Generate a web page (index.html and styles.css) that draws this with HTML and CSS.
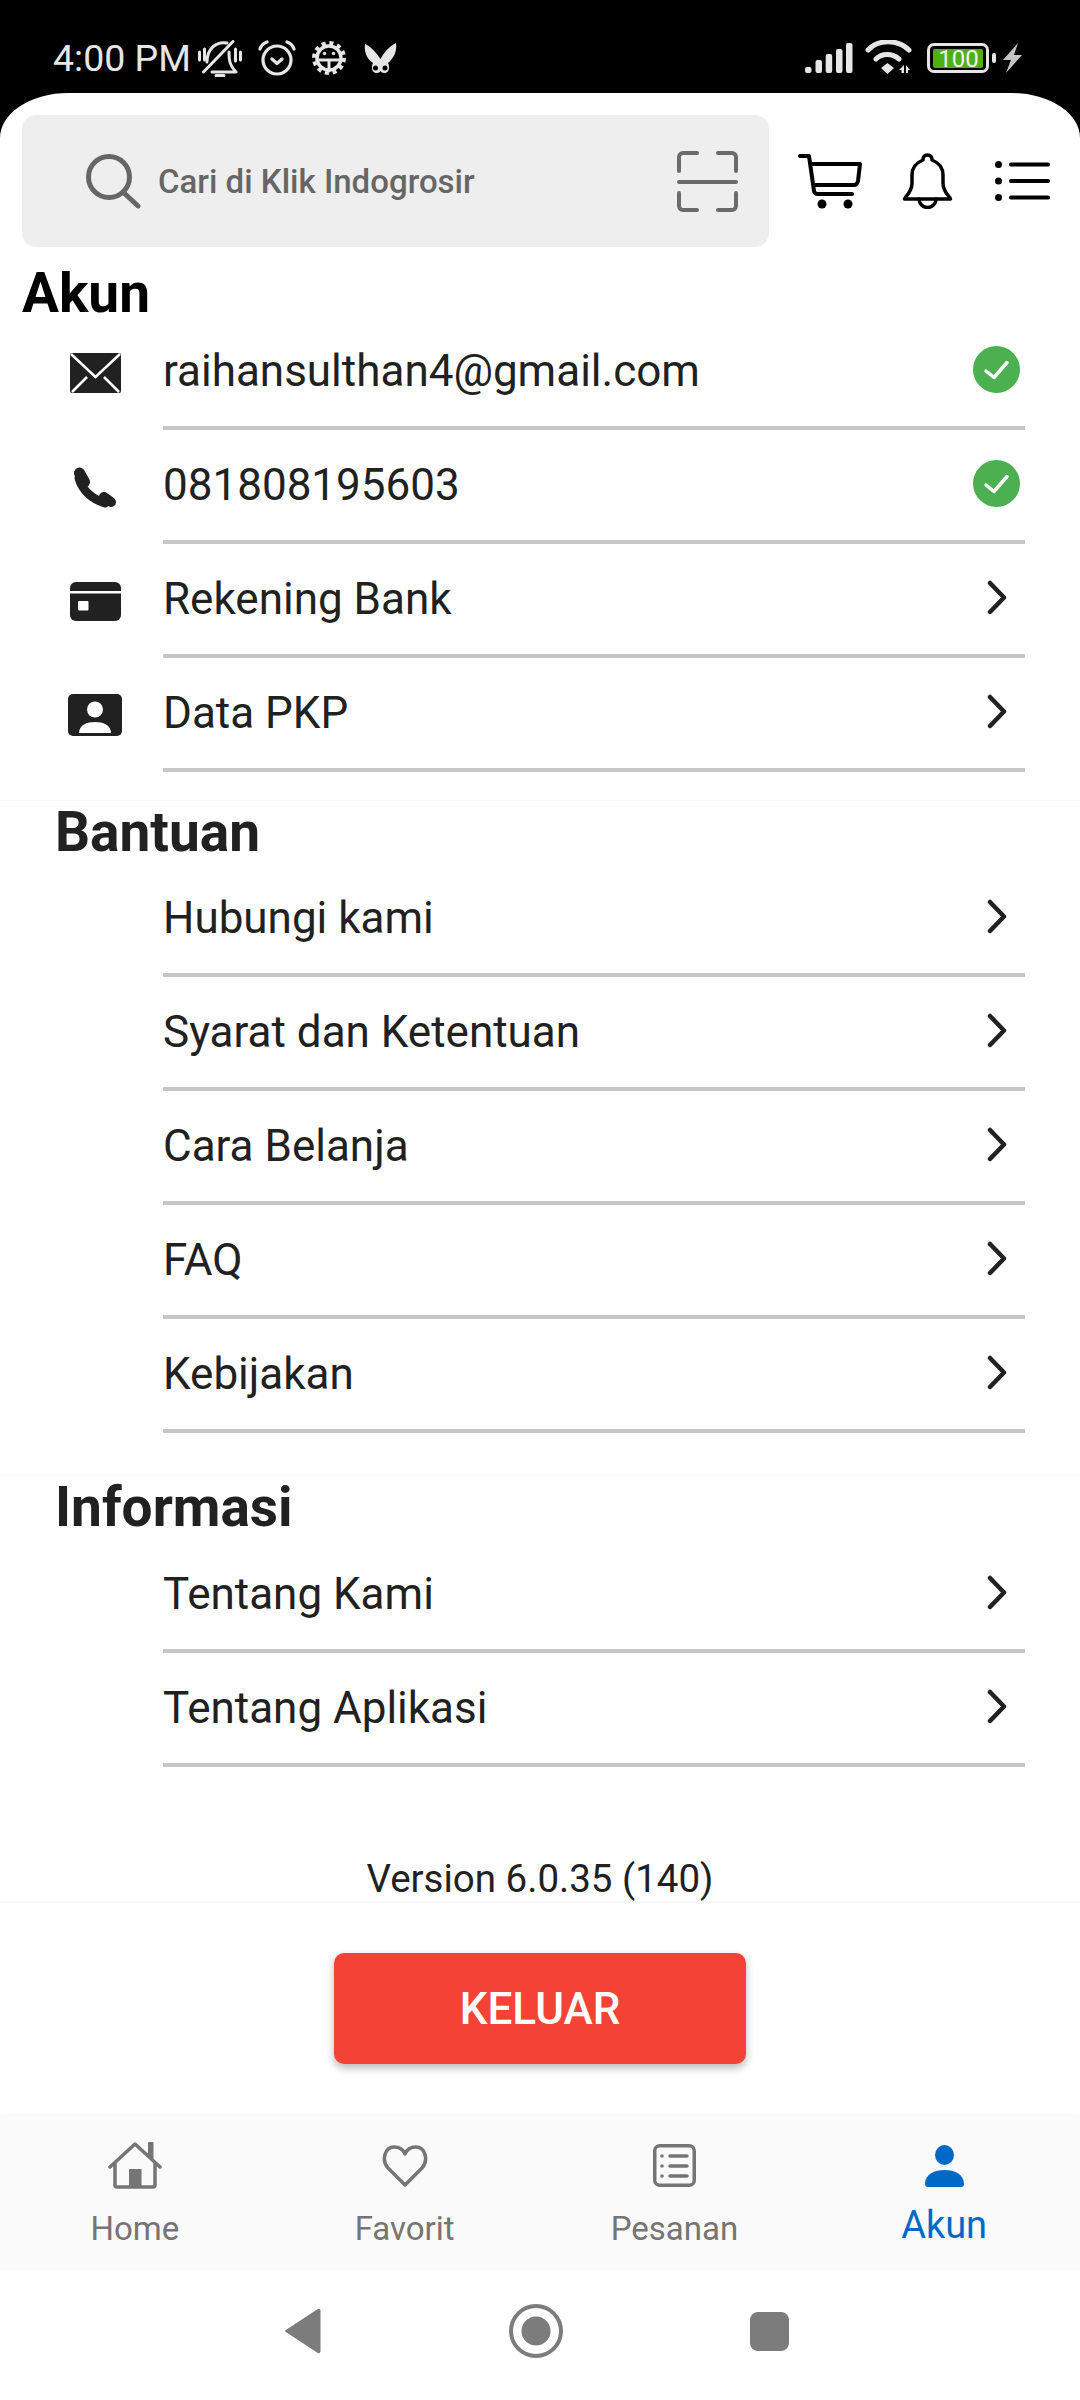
FILE: index.html
```html
<!DOCTYPE html>
<html lang="id">
<head>
    <meta charset="UTF-8">
    <meta name="viewport" content="width=device-width, initial-scale=1.0">
    <title>Akun</title>
    <link rel="stylesheet" href="styles.css">
</head>
<body>
    <div class="status">
        <span class="time">4:00 PM</span>
        <div class="status-left">
            <svg class="ic-mute" viewBox="0 0 44 37" fill="none" stroke="#e6e6e6" stroke-width="3" stroke-linecap="round" stroke-linejoin="round">
                <path d="M9 22C9 9 18 1 29 3M31 12c0 9 1 14 7 20H14"/>
                <path d="M18 35.500h8M5.500 32L35 1.500M1.500 12v8M6.500 9v11M42.500 12v8M37.500 9v12"/>
            </svg>
            <svg class="ic-alarm" viewBox="0 0 38 36" fill="none" stroke="#e6e6e6" stroke-width="3.200" stroke-linecap="round" stroke-linejoin="round">
                <circle cx="19" cy="20" r="14"/>
                <path d="M2 9c1-3 4-6 7-7M36 9c-1-3-4-6-7-7M14 19l5 4.500 5-4.500"/>
            </svg>
            <svg class="ic-gear" viewBox="0 0 34 34" fill="none" stroke="#e6e6e6" stroke-linecap="round">
                <circle cx="17" cy="17" r="15" stroke-width="4" stroke-dasharray="4 3.850" stroke-linecap="butt"/>
                <circle cx="17" cy="17" r="12" stroke-width="3.500"/>
                <path d="M5 19h24M17 19v11" stroke-width="3"/>
                <circle cx="12.500" cy="12.500" r="1.700" fill="#e6e6e6" stroke="none"/>
                <circle cx="21.500" cy="12.500" r="1.700" fill="#e6e6e6" stroke="none"/>
            </svg>
            <svg class="ic-fox" viewBox="0 0 33 31">
                <path fill="#e6e6e6" d="M1 1C6 3 12 9 16.500 16 20 9 26 3 32 0c1 7-1 14-8 20 1 2 1 3 1 5 0 3-2 5-5 5-1.500 0-3-.7-3.500-2-.5 1.300-2 2-3.500 2-3 0-5-2-5-5 0-2 0-3 1-5C2 15 0 8 1 1z"/>
                <circle cx="11.500" cy="25" r="2.500" fill="#000"/>
                <circle cx="21" cy="25" r="2.500" fill="#000"/>
            </svg>
        </div>
        <div class="status-right">
            <svg class="ic-signal" viewBox="0 0 48 30" fill="#e6e6e6">
                <rect x="0" y="24" width="6.500" height="6" rx="2"/>
                <rect x="10.500" y="17" width="6.500" height="13" rx="2"/>
                <rect x="20.700" y="11" width="6.500" height="19" rx="2"/>
                <rect x="31" y="6" width="6.500" height="24" rx="2"/>
                <rect x="41" y="0" width="6.500" height="30" rx="2"/>
            </svg>
            <svg class="ic-wifi" viewBox="0 0 47 36" fill="none" stroke="#e6e6e6" stroke-width="5" stroke-linecap="round">
                <path d="M3 10C13-1 33-1 44 10M11 19c6-6 16-6 23 0"/>
                <path fill="#e6e6e6" stroke="none" d="M16 28l6.500-5 6.500 5-6.500 6zM39 33v-8l-5 5h2.500v3zM41 33v-8l4 5h-2v3z"/>
            </svg>
            <svg class="ic-battery" viewBox="0 0 69 30">
                <rect x="1.500" y="1.500" width="59" height="27" rx="5.500" fill="none" stroke="#e6e6e6" stroke-width="3"/>
                <rect x="6" y="6" width="50" height="19" rx="2" fill="#4fb011"/>
                <rect x="65" y="10" width="4" height="10" rx="2" fill="#e6e6e6"/>
                <text class="battery-text" x="31.500" y="24" text-anchor="middle">100</text>
            </svg>
            <svg class="ic-bolt" viewBox="0 0 19 30" fill="#c4c4c4">
                <path d="M15 0L0 17h8L3 30l16-18h-8z"/>
            </svg>
        </div>
    </div>

    <div class="sheet">
        <div class="topbar">
            <div class="search">
                <svg class="ic-search" viewBox="0 0 55 55" fill="none" stroke="#666" stroke-width="5" stroke-linecap="round">
                    <circle cx="23" cy="23" r="20.500"/>
                    <path d="M37 38l15 14"/>
                </svg>
                <span class="search-text">Cari di Klik Indogrosir</span>
                <svg class="ic-scan" viewBox="0 0 61 61" fill="none" stroke="#6b6b6b" stroke-width="4" stroke-linecap="round">
                    <path d="M2 20V6a4 4 0 0 1 4-4h14M41 2h14a4 4 0 0 1 4 4v14M2 42v13a4 4 0 0 0 4 4h14M41 59h14a4 4 0 0 0 4-4V42M2 31h57"/>
                </svg>
            </div>
            <svg class="ic-cart" viewBox="0 0 64 55" fill="none" stroke="#000" stroke-width="4" stroke-linecap="round" stroke-linejoin="round">
                <path d="M2 2h9l5 35c.3 2 2 3 4 3h34"/>
                <path d="M13 10h49l-2 17c-.3 2-2 4-4 4H17"/>
                <circle cx="24" cy="50" r="4.500" fill="#000" stroke="none"/>
                <circle cx="50" cy="50" r="4.500" fill="#000" stroke="none"/>
            </svg>
            <svg class="ic-bell" viewBox="0 0 51 56" fill="none" stroke="#000" stroke-width="3.500" stroke-linecap="round" stroke-linejoin="round">
                <path d="M2.500 46C2.500 44 10 40 10 30V22C10 13 16 9 21 7 21 3 23 2 25.500 2S30 3 30 7C35 9 41 13 41 22V30C41 40 48.500 44 48.500 46Z"/>
                <path d="M17 46a8.500 8.500 0 0 0 17 0"/>
            </svg>
            <svg class="ic-menu" viewBox="0 0 55 40" fill="none" stroke="#000" stroke-width="4" stroke-linecap="round">
                <circle cx="3.500" cy="3.500" r="3.500" fill="#000" stroke="none"/>
                <circle cx="3.500" cy="20" r="3.500" fill="#000" stroke="none"/>
                <circle cx="3.500" cy="36.500" r="3.500" fill="#000" stroke="none"/>
                <path d="M16 3.500h37M16 20h37M16 36.500h37"/>
            </svg>
        </div>

        <div class="content">
            <h1 class="title-akun">Akun</h1>
            <div class="row">
                <div class="row-icon">
                    <svg class="ic-mail" viewBox="0 0 51 40">
                        <rect width="51" height="40" rx="2" fill="#212121"/>
                        <path d="M1 1l24.500 23L50 1M2 39l15-15M49 39L34 24" fill="none" stroke="#fff" stroke-width="2.500"/>
                    </svg>
                </div>
                <div class="row-body">
                    <span class="row-text">raihansulthan4@gmail.com</span>
                    <div class="row-end">
                        <svg class="ic-check" viewBox="0 0 47 47">
                            <circle cx="23.500" cy="23.500" r="23.500" fill="#4caf50"/>
                            <path d="M13 25l8 6.500L34 16.500" fill="none" stroke="#fff" stroke-width="3.500" stroke-linecap="round" stroke-linejoin="round"/>
                        </svg>
                    </div>
                </div>
            </div>
            <div class="row">
                <div class="row-icon">
                    <svg class="ic-phone" viewBox="0 0 43 43" fill="none" stroke="#212121" stroke-linecap="round">
                        <path d="M5.500 7l5 9" stroke-width="11"/>
                        <path d="M30 31l7 5" stroke-width="10"/>
                        <path d="M5 12C8 24 18 33 31 37" stroke-width="9"/>
                    </svg>
                </div>
                <div class="row-body">
                    <span class="row-text">081808195603</span>
                    <div class="row-end">
                        <svg class="ic-check" viewBox="0 0 47 47">
                            <circle cx="23.500" cy="23.500" r="23.500" fill="#4caf50"/>
                            <path d="M13 25l8 6.500L34 16.500" fill="none" stroke="#fff" stroke-width="3.500" stroke-linecap="round" stroke-linejoin="round"/>
                        </svg>
                    </div>
                </div>
            </div>
            <div class="row">
                <div class="row-icon">
                    <svg class="ic-card" viewBox="0 0 51 39">
                        <rect width="51" height="39" rx="6" fill="#212121"/>
                        <rect y="9" width="51" height="2.500" fill="#fff"/>
                        <rect x="8" y="19" width="10.500" height="9.500" rx="1" fill="#fff"/>
                    </svg>
                </div>
                <div class="row-body">
                    <span class="row-text">Rekening Bank</span>
                    <div class="row-end">
                        <svg class="ic-chevron" viewBox="0 0 20 35"><path d="M3 3l14 14.500L3 32" fill="none" stroke="#212121" stroke-width="4.500" stroke-linecap="round" stroke-linejoin="round"/></svg>
                    </div>
                </div>
            </div>
            <div class="row">
                <div class="row-icon">
                    <svg class="ic-contact" viewBox="0 0 54 42">
                        <rect width="54" height="42" rx="5" fill="#212121"/>
                        <circle cx="27" cy="15.500" r="8" fill="#fff"/>
                        <path d="M11 39c0-8 8-11 16-11s16 3 16 11z" fill="#fff"/>
                    </svg>
                </div>
                <div class="row-body">
                    <span class="row-text">Data PKP</span>
                    <div class="row-end">
                        <svg class="ic-chevron" viewBox="0 0 20 35"><path d="M3 3l14 14.500L3 32" fill="none" stroke="#212121" stroke-width="4.500" stroke-linecap="round" stroke-linejoin="round"/></svg>
                    </div>
                </div>
            </div>

            <h2 class="section-title section-help">Bantuan</h2>
            <div class="row">
                <div class="row-icon"></div>
                <div class="row-body">
                    <span class="row-text">Hubungi kami</span>
                    <div class="row-end">
                        <svg class="ic-chevron" viewBox="0 0 20 35"><path d="M3 3l14 14.500L3 32" fill="none" stroke="#212121" stroke-width="4.500" stroke-linecap="round" stroke-linejoin="round"/></svg>
                    </div>
                </div>
            </div>
            <div class="row">
                <div class="row-icon"></div>
                <div class="row-body">
                    <span class="row-text">Syarat dan Ketentuan</span>
                    <div class="row-end">
                        <svg class="ic-chevron" viewBox="0 0 20 35"><path d="M3 3l14 14.500L3 32" fill="none" stroke="#212121" stroke-width="4.500" stroke-linecap="round" stroke-linejoin="round"/></svg>
                    </div>
                </div>
            </div>
            <div class="row">
                <div class="row-icon"></div>
                <div class="row-body">
                    <span class="row-text">Cara Belanja</span>
                    <div class="row-end">
                        <svg class="ic-chevron" viewBox="0 0 20 35"><path d="M3 3l14 14.500L3 32" fill="none" stroke="#212121" stroke-width="4.500" stroke-linecap="round" stroke-linejoin="round"/></svg>
                    </div>
                </div>
            </div>
            <div class="row">
                <div class="row-icon"></div>
                <div class="row-body">
                    <span class="row-text">FAQ</span>
                    <div class="row-end">
                        <svg class="ic-chevron" viewBox="0 0 20 35"><path d="M3 3l14 14.500L3 32" fill="none" stroke="#212121" stroke-width="4.500" stroke-linecap="round" stroke-linejoin="round"/></svg>
                    </div>
                </div>
            </div>
            <div class="row">
                <div class="row-icon"></div>
                <div class="row-body">
                    <span class="row-text">Kebijakan</span>
                    <div class="row-end">
                        <svg class="ic-chevron" viewBox="0 0 20 35"><path d="M3 3l14 14.500L3 32" fill="none" stroke="#212121" stroke-width="4.500" stroke-linecap="round" stroke-linejoin="round"/></svg>
                    </div>
                </div>
            </div>

            <h2 class="section-title section-info">Informasi</h2>
            <div class="row">
                <div class="row-icon"></div>
                <div class="row-body">
                    <span class="row-text">Tentang Kami</span>
                    <div class="row-end">
                        <svg class="ic-chevron" viewBox="0 0 20 35"><path d="M3 3l14 14.500L3 32" fill="none" stroke="#212121" stroke-width="4.500" stroke-linecap="round" stroke-linejoin="round"/></svg>
                    </div>
                </div>
            </div>
            <div class="row">
                <div class="row-icon"></div>
                <div class="row-body">
                    <span class="row-text">Tentang Aplikasi</span>
                    <div class="row-end">
                        <svg class="ic-chevron" viewBox="0 0 20 35"><path d="M3 3l14 14.500L3 32" fill="none" stroke="#212121" stroke-width="4.500" stroke-linecap="round" stroke-linejoin="round"/></svg>
                    </div>
                </div>
            </div>

            <p class="version">Version 6.0.35 (140)</p>
        </div>

        <div class="logout-bar">
            <button class="logout">KELUAR</button>
        </div>

        <div class="tabs">
            <div class="tab">
                <div class="tab-icon">
                    <svg class="ic-home" viewBox="0 0 54 47" fill="none" stroke="#757575" stroke-width="3.500" stroke-linecap="round" stroke-linejoin="round">
                        <path d="M2 25L27 2l25 23M7 21v22a2 2 0 0 0 2 2h36a2 2 0 0 0 2-2V21"/>
                        <path d="M41 14V1h3.500v16" fill="#757575" stroke-width="2"/>
                        <rect x="21" y="27" width="12.500" height="18" fill="#757575" stroke="none"/>
                    </svg>
                </div>
                <span class="tab-label">Home</span>
            </div>
            <div class="tab">
                <div class="tab-icon">
                    <svg class="ic-heart" viewBox="0 0 46 42" fill="none" stroke="#757575" stroke-width="3.500" stroke-linejoin="round">
                        <path d="M23 40L6 23C-1 15 3 2 12 2c5 0 9 2 11 7 2-5 6-7 11-7 9 0 13 13 6 21z"/>
                    </svg>
                </div>
                <span class="tab-label">Favorit</span>
            </div>
            <div class="tab">
                <div class="tab-icon">
                    <svg class="ic-orders" viewBox="0 0 43 43" fill="none" stroke="#757575" stroke-width="3.500" stroke-linecap="round">
                        <rect x="1.750" y="1.750" width="39.500" height="39.500" rx="5"/>
                        <path d="M17 12h17M17 22h17M17 32h17"/>
                        <circle cx="9" cy="12" r="1.800" fill="#757575" stroke="none"/>
                        <circle cx="9" cy="22" r="1.800" fill="#757575" stroke="none"/>
                        <circle cx="9" cy="32" r="1.800" fill="#757575" stroke="none"/>
                    </svg>
                </div>
                <span class="tab-label">Pesanan</span>
            </div>
            <div class="tab tab-active">
                <div class="tab-icon">
                    <svg class="ic-person" viewBox="0 0 39 42" fill="#0069c8">
                        <ellipse cx="19.500" cy="10" rx="9.500" ry="10"/>
                        <path d="M0 38C1 29 9 25 19.500 25S38 29 39 38c0 3-1 4-3 4H3c-2 0-3-1-3-4z"/>
                    </svg>
                </div>
                <span class="tab-label">Akun</span>
            </div>
        </div>

        <div class="sysnav">
            <svg class="ic-back" viewBox="0 0 37 46"><path d="M2 23L34 2c.8-.5 1.500 0 1.500 1v40c0 1-.7 1.500-1.500 1z" fill="#7c7c7c" stroke="#7c7c7c" stroke-width="2" stroke-linejoin="round"/></svg>
            <svg class="ic-homebtn" viewBox="0 0 54 54">
                <circle cx="27" cy="27" r="25" fill="none" stroke="#7c7c7c" stroke-width="4"/>
                <circle cx="27" cy="27" r="14.500" fill="#7c7c7c"/>
            </svg>
            <div class="ic-recent"></div>
        </div>
    </div>
</body>
</html>
```

FILE: styles.css
```css
* {
    margin: 0;
    padding: 0;
    box-sizing: border-box;
}
body {
    width: 1080px;
    height: 2400px;
    background: #000;
    font-family: Roboto, "Noto Sans", sans-serif;
    color: #212121;
    overflow: hidden;
}
svg {
    display: block;
    flex: none;
}

/* status bar */
.status {
    height: 93px;
    padding: 23px 58px 0 53px;
    display: flex;
    align-items: center;
    color: #e6e6e6;
}
.time {
    font-size: 37.5px;
    width: 136px;
    white-space: nowrap;
}
.status-left {
    display: flex;
    align-items: center;
    gap: 16px;
    margin-left: 9px;
}
.status-right {
    display: flex;
    align-items: center;
    margin-left: auto;
}
.ic-mute { width: 44px; height: 37px; }
.ic-alarm { width: 38px; height: 36px; }
.ic-gear { width: 34px; height: 34px; }
.ic-fox { width: 33px; height: 31px; margin-left: 2px; }
.ic-signal { width: 48px; height: 30px; }
.ic-wifi { width: 47px; height: 36px; margin-left: 12px; }
.ic-battery { width: 69px; height: 30px; margin-left: 15px; }
.ic-bolt { width: 19px; height: 30px; margin-left: 7px; }
.battery-text {
    font-family: Roboto, sans-serif;
    font-size: 24px;
    fill: #f2f2f2;
}

/* white sheet */
.sheet {
    height: 2307px;
    background: #fff;
    border-radius: 68px 68px 0 0 / 45px 45px 0 0;
    display: flex;
    flex-direction: column;
}
.topbar {
    padding: 22px 30px 0 22px;
    display: flex;
    align-items: center;
}
.search {
    width: 747px;
    height: 132px;
    background: #eeeeee;
    border-radius: 14px;
    padding: 0 31px 0 64px;
    display: flex;
    align-items: center;
}
.ic-search { width: 55px; height: 55px; }
.search-text {
    margin-left: 17px;
    font-size: 33px;
    font-weight: 500;
    color: #666;
}
.ic-scan { width: 61px; height: 61px; margin-left: auto; }
.ic-cart { width: 64px; height: 55px; margin-left: 29px; }
.ic-bell { width: 51px; height: 56px; margin-left: 40px; }
.ic-menu { width: 55px; height: 40px; margin-left: 42px; }

/* list */
.content {
    flex: 1;
}
.title-akun {
    padding: 23px 0 0 22px;
    height: 69px;
    font-size: 55px;
    line-height: 46px;
    font-weight: 700;
    color: #000;
}
.section-title {
    padding-left: 55px;
    height: 64px;
    border-top: 1px solid #f9f9f9;
    font-size: 55px;
    line-height: 63px;
    font-weight: 700;
}
.section-help {
    margin-top: 28px;
    height: 63px;
}
.section-info {
    margin-top: 42px;
}
.row {
    height: 114px;
    display: flex;
}
.row-icon {
    width: 100px;
    margin: 0 18px 0 45px;
    display: flex;
    align-items: center;
    justify-content: center;
}
.row-body {
    flex: 1;
    margin-right: 55px;
    border-bottom: 4px solid #c6c6c6;
    display: flex;
    align-items: center;
}
.row-text {
    font-size: 44px;
    white-space: nowrap;
}
.row-end {
    width: 47px;
    margin: 0 5px 0 auto;
    padding-bottom: 3px;
    display: flex;
    justify-content: center;
}
.ic-mail { width: 51px; height: 40px; }
.ic-phone { width: 43px; height: 43px; }
.ic-card { width: 51px; height: 39px; }
.ic-contact { width: 54px; height: 42px; }
.ic-check { width: 47px; height: 47px; }
.ic-chevron { width: 20px; height: 35px; }
.version {
    margin-top: 89px;
    text-align: center;
    font-size: 38.5px;
    line-height: 45px;
}

/* logout */
.logout-bar {
    height: 214px;
    flex: none;
    border-top: 2px solid #f6f6f6;
    padding-top: 50px;
    display: flex;
    justify-content: center;
}
.logout {
    width: 412px;
    height: 111px;
    border: 0;
    border-radius: 10px;
    background: #f44336;
    color: #fff;
    font-family: Roboto, sans-serif;
    font-size: 44px;
    font-weight: 500;
    box-shadow: 0 4px 8px rgba(0, 0, 0, 0.28);
}

/* bottom tabs */
.tabs {
    height: 155px;
    flex: none;
    background: #fafafa;
    box-shadow: 0 -2px 3px rgba(0, 0, 0, 0.02);
    display: flex;
}
.tab {
    width: 269.75px;
    padding-top: 27px;
    display: flex;
    flex-direction: column;
    align-items: center;
    color: #757575;
}
.tab-icon {
    height: 47px;
    display: flex;
    align-items: center;
}
.tab-label {
    margin-top: 20px;
    font-size: 33px;
    line-height: 40px;
}
.tab-active {
    color: #0069c8;
}
.tab-active .tab-label {
    margin-top: 16px;
    font-size: 38px;
}
.ic-home { width: 54px; height: 47px; }
.ic-heart { width: 46px; height: 42px; }
.ic-orders { width: 43px; height: 43px; }
.ic-person { width: 39px; height: 42px; }

/* android buttons */
.sysnav {
    height: 130px;
    flex: none;
    padding: 0 0 8px 284px;
    display: flex;
    align-items: center;
}
.ic-back { width: 37px; height: 46px; }
.ic-homebtn { width: 54px; height: 54px; margin-left: 188px; }
.ic-recent {
    width: 39px;
    height: 39px;
    margin-left: 187px;
    border-radius: 8px;
    background: #7c7c7c;
}
```
